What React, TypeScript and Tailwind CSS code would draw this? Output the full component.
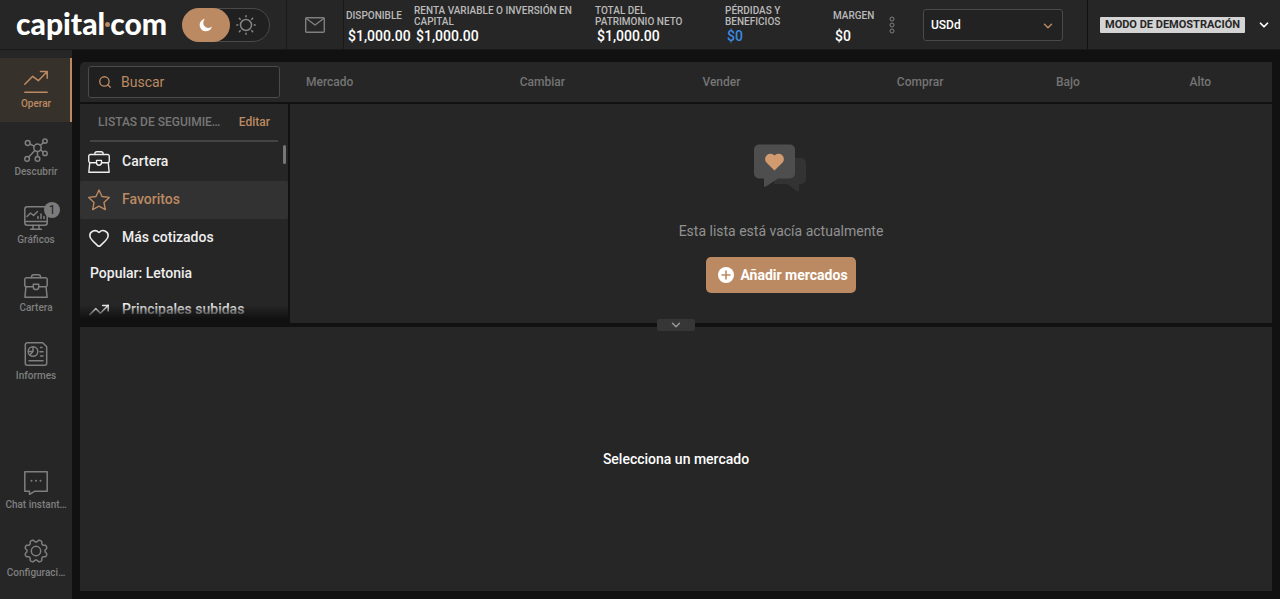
import { ReactNode } from "react";
import { ChevronDown, Heart, Search, TrendingUp } from "lucide-react";

type SvgProps = { children: ReactNode; className?: string };

function Glyph({ children, className = "size-6" }: SvgProps) {
  return (
    <svg
      viewBox="0 0 24 24"
      className={className}
      fill="none"
      stroke="currentColor"
      strokeWidth="1.5"
      strokeLinecap="round"
      strokeLinejoin="round"
      aria-hidden="true"
    >
      {children}
    </svg>
  );
}

const TradeIcon = () => (
  <Glyph>
    <path d="M.8 14.3 8.7 6.3l5.6 4.400L23 1.800M16.500 1.500h6.700V8.200M.8 22.300h22.400" />
  </Glyph>
);

const DiscoverIcon = () => (
  <Glyph>
    <circle cx="3.7" cy="5" r="2.4" />
    <circle cx="21" cy="3.1" r="2.2" />
    <circle cx="13.5" cy="9.8" r="3.7" />
    <circle cx="21" cy="15.4" r="2.2" />
    <circle cx="13.5" cy="20.9" r="2.3" />
    <circle cx="3.1" cy="20.9" r="2.3" />
    <path d="M6 6l4.100 2.200M19.200 4.800l-3 2.500M19 13.900l-2.600-2M13.500 13.500v4.900M4.800 19.100l6-6.500" />
  </Glyph>
);

const ChartsIcon = () => (
  <Glyph>
    <rect x=".8" y=".8" width="22.4" height="18.400" rx="2.500" />
    <path d="M.8 15.500h22.400M9 19.300v3.800M15 19.300v3.800M6.500 23.200h11M3 10.500l3.500-3.500 3 2.500 4-4M14 12.500v-2M17 12.500V8M20 12.500v-2" />
  </Glyph>
);

const CaseIcon = ({ className = "size-6" }: { className?: string }) => (
  <Glyph className={className}>
    <path d="M7.500 3.800V3A2.200 2.200 0 0 1 9.700.8h4.600A2.200 2.200 0 0 1 16.500 3v.8" />
    <path d="M9.200 12.800H2.600A1.800 1.800 0 0 1 .8 11V5.600a1.800 1.800 0 0 1 1.800-1.800h18.800a1.800 1.800 0 0 1 1.800 1.800V11a1.800 1.800 0 0 1-1.800 1.800h-6.600" />
    <path d="M1.900 12.800.9 23.200h22.200l-1-10.400" />
    <path d="M9.300 10.200h5.400v2.700a2.700 2.700 0 0 1-5.400 0z" />
  </Glyph>
);

const ReportsIcon = () => (
  <Glyph>
    <path d="M3.300.8h15.400l4 4v16.400a2 2 0 0 1-2 2H3.300a2 2 0 0 1-2-2V2.800a2 2 0 0 1 2-2z" />
    <circle cx="9" cy="9.500" r="4.800" />
    <path d="M9 4.700v4.800H5.200M9 9.500 5.800 13M16.500 5.500h1.500M16 9.700h3M16.500 14h2.500M5 18.700h14" />
  </Glyph>
);

const ChatIcon = () => (
  <Glyph>
    <path d="M.8.8h22.400v19.500H10.500L5.500 23.400v-3.100H.8z" />
    <path d="M7.500 9.800h.01M12 9.800h.01M16.500 9.800h.01" strokeWidth="2" />
  </Glyph>
);

const StarIcon = () => (
  <Glyph className="mr-3 size-[22px]">
    <path d="M12 1l3.300 7.200 7.900 1-5.800 5.400 1.500 7.900L12 18.700l-6.900 3.800 1.500-7.900L.8 9.200l7.900-1z" />
  </Glyph>
);

const gearPath = (() => {
  const points: string[] = [];
  for (let degree = 0; degree < 360; degree += 3) {
    const angle = (degree * Math.PI) / 180;
    const wave = Math.cos(8 * angle - Math.PI);
    const radius = 10.1 + 1.3 * Math.tanh(1.6 * wave + 0.3);
    points.push(`${(12 + radius * Math.sin(angle)).toFixed(2)} ${(12 - radius * Math.cos(angle)).toFixed(2)}`);
  }
  return `M${points.join("L")}Z`;
})();

const GearIcon = () => (
  <Glyph>
    <path d={gearPath} />
    <circle cx="12" cy="12" r="4.700" />
  </Glyph>
);

type NavItem = { label: string; icon: ReactNode; active?: boolean; badge?: string };

const mainNav: NavItem[] = [
  { label: "Operar", icon: <TradeIcon />, active: true },
  { label: "Descubrir", icon: <DiscoverIcon /> },
  { label: "Gráficos", icon: <ChartsIcon />, badge: "1" },
  { label: "Cartera", icon: <CaseIcon /> },
  { label: "Informes", icon: <ReportsIcon /> },
];

const footNav: NavItem[] = [
  { label: "Chat instant…", icon: <ChatIcon /> },
  { label: "Configuraci…", icon: <GearIcon /> },
];

function NavLink({ item }: { item: NavItem }) {
  return (
    <a
      href="#"
      className={
        item.active
          ? "flex h-16 flex-col items-center bg-[#37312b] pt-3 text-[#bc8a62] shadow-[inset_-2px_0_0_#bc8a62]"
          : "flex h-16 flex-col items-center pt-3 text-[#7f7f7f]"
      }
    >
      <span className="relative">
        {item.icon}
        {item.badge && (
          <span className="absolute -top-1 -right-3 flex size-4 items-center justify-center rounded-full bg-[#7b7b7b] text-xs text-[#222]">
            {item.badge}
          </span>
        )}
      </span>
      <span className="w-full text-center text-[10px] leading-5 font-medium whitespace-nowrap">{item.label}</span>
    </a>
  );
}

const stats = [
  { label: "Disponible", value: "$1,000.00", width: "w-[68px]", tone: "text-white" },
  { label: "Renta variable o inversión en capital", value: "$1,000.00", width: "w-[181px]", tone: "text-white" },
  { label: "Total del patrimonio neto", value: "$1,000.00", width: "w-[130px] pr-8", tone: "text-white" },
  { label: "Pérdidas y beneficios", value: "$0", width: "w-[108px] pr-8", tone: "text-[#3a8ae0]" },
  { label: "Margen", value: "$0", width: "w-[56px]", tone: "text-white" },
];

function Header() {
  return (
    <header className="flex h-[50px] items-stretch border-b border-[#191919] bg-[#262626]">
      <a href="#" aria-label="capital.com" className="flex w-[182px] shrink-0 items-center pl-4 font-[Lato] text-[30px] leading-8 font-black text-white">
        <span className="-mt-1 flex items-center">
          capital
          <span className="mt-1 size-[5px] rounded-full bg-[#bc8a62]" />
          com
        </span>
      </a>
      <div className="flex shrink-0 items-center border-r border-[#191919] pr-4">
        <div className="flex h-[34px] w-[88px] rounded-full border border-[#4a4a4a] bg-[#202020]">
          <button aria-label="Modo oscuro" className="-my-px -ml-px flex w-12 items-center justify-center rounded-full bg-[#bc8a62] text-white">
            <svg viewBox="0 0 14 14" className="size-[14px]" fill="currentColor" aria-hidden="true">
              <path d="M6 .8A6.300 6.300 0 1 0 13 8.600 5 5 0 0 1 6 .8z" />
            </svg>
          </button>
          <button aria-label="Modo claro" className="flex flex-1 items-center pl-1.5 text-[#858585]">
            <svg viewBox="0 0 20 20" className="size-5" fill="none" stroke="currentColor" strokeWidth="1.500" strokeLinecap="round" aria-hidden="true">
              <circle cx="10" cy="10" r="5.500" />
              <path d="M10 .8v1M10 18.200v1M.8 10h1M18.200 10h1M3.400 3.400l.8.8M15.800 15.800l.8.8M3.400 16.600l.8-.8M15.800 4.200l.8-.8" />
            </svg>
          </button>
        </div>
      </div>
      <button aria-label="Mensajes" className="flex w-[57px] shrink-0 items-center justify-center border-r border-[#191919] text-[#7f7f7f]">
        <svg viewBox="0 0 20 16" className="h-4 w-5" fill="none" stroke="currentColor" strokeWidth="1.400" strokeLinejoin="round" aria-hidden="true">
          <rect x=".7" y=".7" width="18.600" height="14.600" rx="1" />
          <path d="M1 1.200 10 8l9-6.800" />
        </svg>
      </button>
      <dl className="flex shrink-0 pt-1 pl-0.5">
        {stats.map((stat) => (
          <div key={stat.label} className={stat.width}>
            <dt className="flex h-[23px] items-center text-[10px] leading-[11px] font-medium text-[#bababa] uppercase">{stat.label}</dt>
            <dd className={`pl-0.5 text-sm leading-[18px] font-medium ${stat.tone}`}>{stat.value}</dd>
          </div>
        ))}
      </dl>
      <button aria-label="Más datos" className="shrink-0 text-[#7f7f7f]">
        <svg viewBox="0 0 6 18" className="h-[18px] w-[6px]" fill="none" stroke="currentColor" aria-hidden="true">
          <circle cx="3" cy="3" r="2" />
          <circle cx="3" cy="9" r="2" />
          <circle cx="3" cy="15" r="2" />
        </svg>
      </button>
      <div className="flex flex-1 items-center justify-end pr-6">
        <div className="relative h-8 w-[140px]">
          <select aria-label="Cuenta" className="size-full appearance-none rounded-[3px] border border-[#4a4a4a] bg-[#222] px-[7px] text-xs font-medium text-white">
            <option>USDd</option>
          </select>
          <ChevronDown strokeWidth={2.5} className="pointer-events-none absolute top-2.5 right-2 size-[14px] text-[#bc8a62]" />
        </div>
      </div>
      <button className="flex shrink-0 items-center border-l border-[#111] pr-[9px] pl-3">
        <span className="flex h-4 w-[145px] items-center justify-center rounded-[1px] bg-[#d4d4d4] text-[11px] leading-4 font-bold text-[#262626] uppercase">
          Modo de demostración
        </span>
        <ChevronDown strokeWidth={3} className="ml-3 size-[14px] text-white" />
      </button>
    </header>
  );
}

const columns = [
  { label: "Mercado", className: "w-[23.4%] pl-4" },
  { label: "Cambiar", className: "w-[18.6%]" },
  { label: "Vender", className: "w-[19.8%]" },
  { label: "Comprar", className: "w-[16.2%]" },
  { label: "Bajo", className: "w-[13.6%]" },
  { label: "Alto", className: "" },
];

type ListRow = { label: string; icon?: ReactNode; className: string };

const lists: ListRow[] = [
  { label: "Cartera", icon: <CaseIcon className="mr-3 size-[22px]" />, className: "h-[38px] px-2" },
  { label: "Favoritos", icon: <StarIcon />, className: "h-[38px] rounded-[2px] bg-[#323232] px-2 text-[#bc8a62]" },
  { label: "Más cotizados", icon: <Heart strokeWidth={1.7} className="mr-3 size-[22px]" />, className: "h-[38px] px-2" },
  { label: "Popular: Letonia", className: "h-[34px] px-2.5" },
  { label: "Principales subidas", icon: <TrendingUp strokeWidth={1.7} className="mr-3 size-[22px]" />, className: "h-[38px] px-2" },
];

function Watchlists() {
  return (
    <aside className="relative w-52 shrink-0 overflow-hidden bg-[#262626] text-sm font-medium text-[#eee]">
      <div className="mx-2.5 flex h-[38px] items-center justify-between border-b-2 border-[#444] px-2 text-xs">
        <h2 className="text-[#777] uppercase">Listas de seguimie…</h2>
        <button className="text-[#bc8a62]">Editar</button>
      </div>
      <ul className="pt-px">
        {lists.map((list) => (
          <li key={list.label}>
            <a href="#" className={`flex items-center ${list.className}`}>
              {list.icon}
              <span className="pb-0.5">{list.label}</span>
            </a>
          </li>
        ))}
      </ul>
      <div className="absolute top-[41px] right-[2px] h-[19px] w-[3px] rounded-full bg-[#777]" />
      <div className="absolute inset-x-0 bottom-0 h-[18px] bg-linear-to-b from-transparent to-[#111] to-75%" />
    </aside>
  );
}

function EmptyList() {
  return (
    <section className="flex flex-1 flex-col items-center bg-[#262626] pt-10">
      <svg viewBox="0 0 54 48" className="h-12 w-[54px]" aria-hidden="true">
        <path d="M20 14h27a5 5 0 0 1 5 5v16a5 5 0 0 1-5 5h-2v6q0 2-2 1L33 40H20z" fill="#333" />
        <path d="M5 .5h31a5 5 0 0 1 5 5v24a5 5 0 0 1-5 5H24l-12 8q-2 1-2-1v-7H5a5 5 0 0 1-5-5v-24a5 5 0 0 1 5-5z" fill="#4e4e4e" />
        <path d="M20.500 26.500 12.400 18.500a5 5 0 0 1 8.100-7 5 5 0 0 1 8.100 7z" fill="#d29b6f" />
      </svg>
      <p className="mt-7 text-sm leading-[22px] text-[#919191]">Esta lista está vacía actualmente</p>
      <button className="mt-[15px] flex h-9 items-center gap-1 rounded-[5px] bg-[#bc8a62] pr-2 pl-2.5 text-sm font-bold text-white">
        <svg viewBox="0 0 20 20" className="size-5" aria-hidden="true">
          <circle cx="10" cy="10" r="8" fill="#fff" />
          <path d="M10 5.500v9M5.500 10h9" stroke="#bc8a62" strokeWidth="1.600" />
        </svg>
        Añadir mercados
      </button>
    </section>
  );
}

export default function App() {
  return (
    <div className="flex min-h-screen flex-col bg-[#111] font-[Roboto,sans-serif] text-white">
      <Header />
      <div className="flex flex-1">
        <nav className="flex w-[72px] shrink-0 flex-col justify-between bg-[#262626] py-2">
          <div className="flex flex-col gap-1">
            {mainNav.map((item) => (
              <NavLink key={item.label} item={item} />
            ))}
          </div>
          <div className="flex flex-col gap-1">
            {footNav.map((item) => (
              <NavLink key={item.label} item={item} />
            ))}
          </div>
        </nav>
        <main className="flex flex-1 flex-col px-2 pt-3 pb-2">
          <div className="flex h-10 items-center rounded-tl-[5px] bg-[#262626]">
            <div className="w-[210px] shrink-0 pl-2">
              <label className="flex h-8 w-48 items-center rounded-[3px] border border-[#4a4a4a] bg-[#202020] pl-[9px] text-[#bc8a62]">
                <Search strokeWidth={2.3} className="size-[14px] shrink-0" />
                <input type="search" aria-label="Buscar" placeholder="Buscar" className="w-full bg-transparent px-[9px] text-sm outline-none placeholder:text-[#bc8a62]" />
              </label>
            </div>
            <table className="w-full table-fixed text-left text-xs text-[#747474]">
              <thead>
                <tr>
                  {columns.map((column) => (
                    <th key={column.label} scope="col" className={`font-medium ${column.className}`}>
                      {column.label}
                    </th>
                  ))}
                </tr>
              </thead>
            </table>
          </div>
          <div className="mt-0.5 flex h-[219px] gap-0.5">
            <Watchlists />
            <EmptyList />
          </div>
          <section className="relative mt-1 flex flex-1 items-center justify-center bg-[#262626]">
            <button aria-label="Contraer panel" className="absolute -top-2 left-1/2 flex h-3 w-[38px] -translate-x-1/2 items-center justify-center rounded-[2px] bg-[#363636] text-[#999]">
              <ChevronDown strokeWidth={2.5} className="size-[14px]" />
            </button>
            <p className="text-sm font-medium">Selecciona un mercado</p>
          </section>
        </main>
      </div>
    </div>
  );
}
